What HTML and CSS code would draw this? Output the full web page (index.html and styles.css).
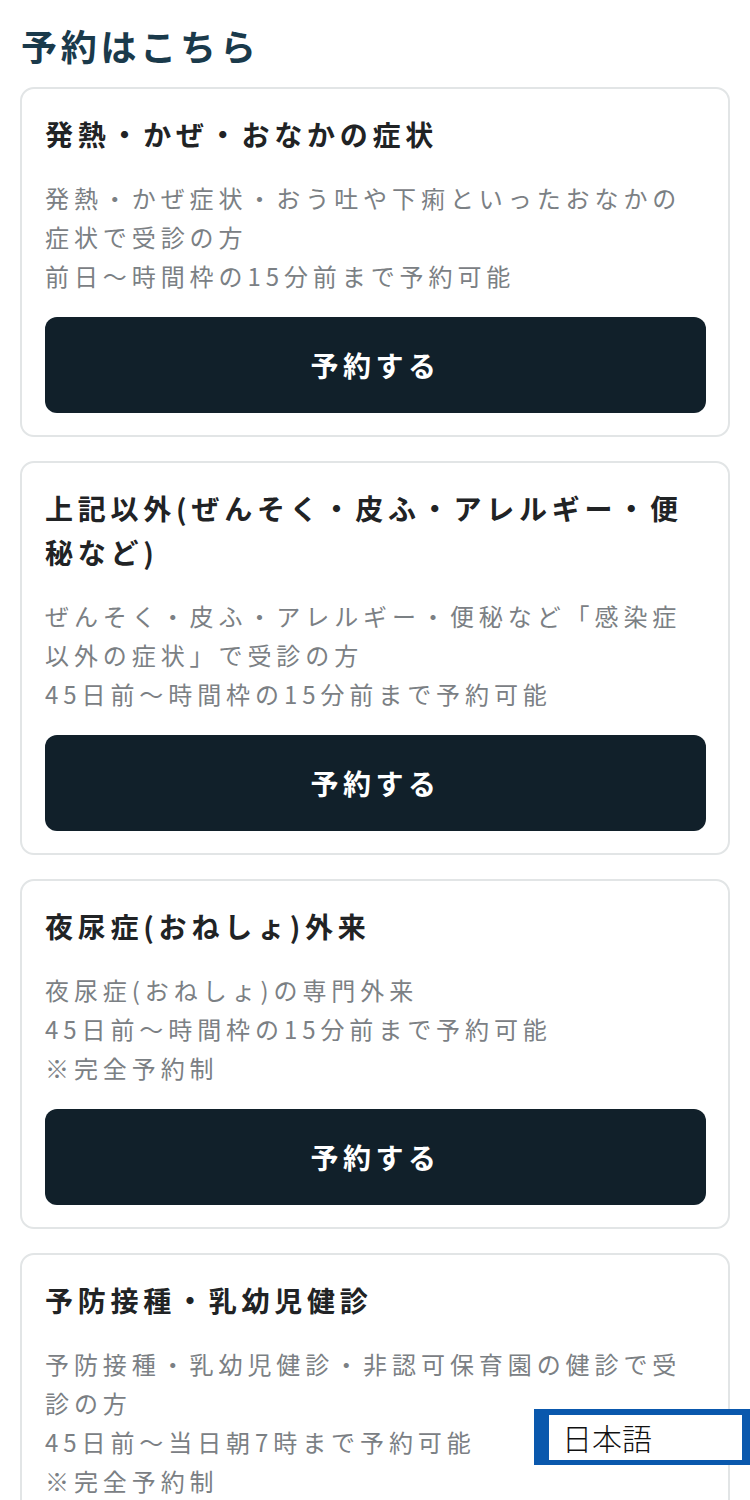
FILE: index.html
```html
<!DOCTYPE html>
<html lang="ja">
<head>
<meta charset="utf-8">
<title>予約はこちら</title>
<link rel="stylesheet" href="styles.css">
</head>
<body>
<main class="page">
  <h1 class="heading">予約はこちら</h1>
  <div class="cards">
    <section class="card">
      <h2 class="card-title">発熱・かぜ・おなかの症状</h2>
      <p class="card-desc">発熱・かぜ症状・おう吐や下痢といったおなかの症状で受診の方<br>前日〜時間枠の15分前まで予約可能</p>
      <a class="btn">予約する</a>
    </section>
    <section class="card">
      <h2 class="card-title">上記以外(ぜんそく・皮ふ・アレルギー・便秘など)</h2>
      <p class="card-desc">ぜんそく・皮ふ・アレルギー・便秘など「感染症以外の症状」で受診の方<br>45日前〜時間枠の15分前まで予約可能</p>
      <a class="btn">予約する</a>
    </section>
    <section class="card">
      <h2 class="card-title">夜尿症(おねしょ)外来</h2>
      <p class="card-desc">夜尿症(おねしょ)の専門外来<br>45日前〜時間枠の15分前まで予約可能<br>※完全予約制</p>
      <a class="btn">予約する</a>
    </section>
    <section class="card">
      <h2 class="card-title">予防接種・乳幼児健診</h2>
      <p class="card-desc">予防接種・乳幼児健診・非認可保育園の健診で受診の方<br>45日前〜当日朝7時まで予約可能<br>※完全予約制</p>
      <a class="btn">予約する</a>
    </section>
  </div>
</main>
<div class="lang">日本語</div>
</body>
</html>
```

FILE: styles.css
```css
html, body {
  margin: 0;
  padding: 0;
  background: #ffffff;
}
body {
  font-family: "Noto Sans CJK JP", "Noto Sans", sans-serif;
}
.page {
  padding: 20px 20px 40px 20px;
}
.heading {
  margin: 0 0 17px 1px;
  font-size: 36px;
  line-height: 50px;
  font-weight: 700;
  letter-spacing: 0.105em;
  color: #1a3a4b;
}
.cards {
  display: flex;
  flex-direction: column;
  gap: 24px;
}
.card {
  border: 2px solid #e2e5e6;
  border-radius: 14px;
  padding: 23px 22px 22px 23px;
}
.card-title {
  margin: 0;
  font-size: 28px;
  line-height: 44px;
  font-weight: 700;
  letter-spacing: 0.17em;
  color: #212325;
}
.card-desc {
  margin: 22px 0 22px 0;
  font-size: 24px;
  line-height: 39px;
  font-weight: 400;
  letter-spacing: 0.205em;
  color: #7b8084;
}
.btn {
  display: flex;
  align-items: center;
  justify-content: center;
  height: 96px;
  border-radius: 12px;
  background: #11202a;
  color: #ffffff;
  font-size: 28px;
  font-weight: 700;
  letter-spacing: 0.16em;
  text-decoration: none;
}
.lang {
  position: fixed;
  left: 534px;
  top: 1409px;
  width: 180px;
  height: 45px;
  border-style: solid;
  border-color: #0a58ad;
  border-width: 6px 8px 5px 15px;
  background: #ffffff;
  font-family: "Noto Sans CJK JP", sans-serif;
  font-size: 30px;
  font-weight: 300;
  line-height: 45px;
  padding-left: 13px;
  color: #111111;
  box-sizing: content-box;
}
```
